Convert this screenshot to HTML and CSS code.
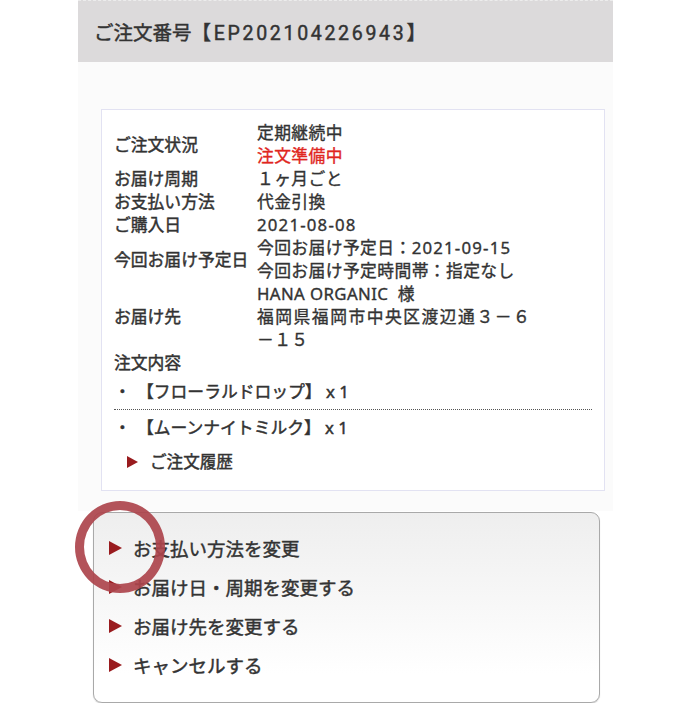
FILE: index.html
```html
<!DOCTYPE html>
<html lang="ja">
<head>
<meta charset="utf-8">
<link rel="stylesheet" href="styles.css">
</head>
<body>
<div class="page">
  <div class="order-head">ご注文番号<span class="num">【EP202104226943】</span></div>
  <div class="panel">
    <div class="detail">
      <table class="info">
        <tr><th>ご注文状況</th><td>定期継続中<br><span class="red">注文準備中</span></td></tr>
        <tr><th>お届け周期</th><td>１ヶ月ごと</td></tr>
        <tr><th>お支払い方法</th><td>代金引換</td></tr>
        <tr><th>ご購入日</th><td><span class="lat">2021-08-08</span></td></tr>
        <tr><th>今回お届け予定日</th><td>今回お届け予定日：<span class="lat">2021-09-15</span><br>今回お届け予定時間帯：指定なし</td></tr>
        <tr><th>お届け先</th><td>HANA ORGANIC&nbsp; 様<br><span class="addr">福岡県福岡市中央区渡辺通３－６</span><br>－１５</td></tr>
        <tr><th colspan="2">注文内容</th></tr>
      </table>
      <ul class="items">
        <li><span class="dot">・</span>【フローラルドロップ】 x 1</li>
        <li><span class="dot">・</span>【ムーンナイトミルク】 x 1</li>
      </ul>
      <div class="history"><span class="tri"></span>ご注文履歴</div>
    </div>
  </div>
  <div class="actions">
    <div class="act"><span class="tri big"></span>お支払い方法を変更</div>
    <div class="act"><span class="tri big"></span>お届け日・周期を変更する</div>
    <div class="act"><span class="tri big"></span>お届け先を変更する</div>
    <div class="act"><span class="tri big"></span>キャンセルする</div>
    <span class="ring"></span>
  </div>
</div>
</body>
</html>
```
FILE: styles.css
```css
html, body {
  margin: 0;
  padding: 0;
  background: #ffffff;
}
body {
  font-family: "Noto Sans", "Noto Sans CJK JP", sans-serif;
  color: #333333;
  -webkit-text-stroke: 0.35px currentColor;
}
.page {
  width: 535px;
  margin-left: 78px;
}
.order-head {
  height: 62px;
  background: #dcdadb;
  border-top: 1px dashed #ececec;
  box-sizing: border-box;
  padding-left: 16px;
  display: flex;
  align-items: center;
  font-family: Roboto, "Noto Sans CJK JP", sans-serif;
  font-size: 19.5px;
  font-weight: 400;
  color: #333;
  -webkit-text-stroke: 0.45px currentColor;
}
.order-head .num {
  letter-spacing: 2.7px;
}
.panel {
  background: #fbfbfb;
  padding: 47px 8px 20px 23px;
}
.detail {
  background: #ffffff;
  border: 1px solid #e2e2f2;
  padding: 11px 12px 17px 12px;
}
.info {
  border-collapse: collapse;
  font-size: 16.8px;
  line-height: 23px;
  font-weight: 400;
}
.info th {
  text-align: left;
  font-weight: 400;
  width: 143px;
  padding: 0;
  vertical-align: middle;
  white-space: nowrap;
  -webkit-text-stroke: 0.45px currentColor;
}
.info td {
  padding: 0;
  vertical-align: middle;
  letter-spacing: 0.4px;
}
.lat {
  letter-spacing: 1.2px;
}
.addr {
  letter-spacing: 1.5px;
}
.red {
  color: #e0261e;
}
.items {
  list-style: none;
  margin: 0;
  padding: 0;
  font-size: 16.8px;
  line-height: 23px;
  font-weight: 400;
  -webkit-text-stroke: 0.45px currentColor;
}
.items li {
  padding: 6px 0;
}
.items .dot {
  display: inline-block;
  width: 23px;
}
.items li:first-child {
  border-bottom: 1px dotted #555;
}
.history {
  margin-top: 5px;
  padding-left: 13px;
  display: flex;
  align-items: center;
  font-size: 16.6px;
  line-height: 23px;
  -webkit-text-stroke: 0.45px currentColor;
}
.tri {
  width: 0;
  height: 0;
  border-top: 6px solid transparent;
  border-bottom: 6px solid transparent;
  border-left: 11px solid #991b1e;
  margin-right: 12px;
}
.tri.big {
  border-top-width: 7px;
  border-bottom-width: 7px;
  border-left-width: 13px;
  margin-right: 11px;
}
.actions {
  position: relative;
  margin: 1px 13px 0 15px;
  border: 1px solid #a9a9a9;
  border-radius: 9px;
  box-shadow: 0 1px 1px rgba(0,0,0,0.18);
  background: linear-gradient(#eeeeee, #ffffff 85%);
  padding: 15px 0 18px 15px;
}
.act {
  height: 39px;
  display: flex;
  align-items: center;
  font-size: 18.5px;
  color: #333;
  -webkit-text-stroke: 0.45px currentColor;
}
.ring {
  position: absolute;
  left: -19px;
  top: -12px;
  width: 72px;
  height: 74px;
  border: 9px solid rgba(172, 68, 76, 0.92);
  border-radius: 50%;
}
```
